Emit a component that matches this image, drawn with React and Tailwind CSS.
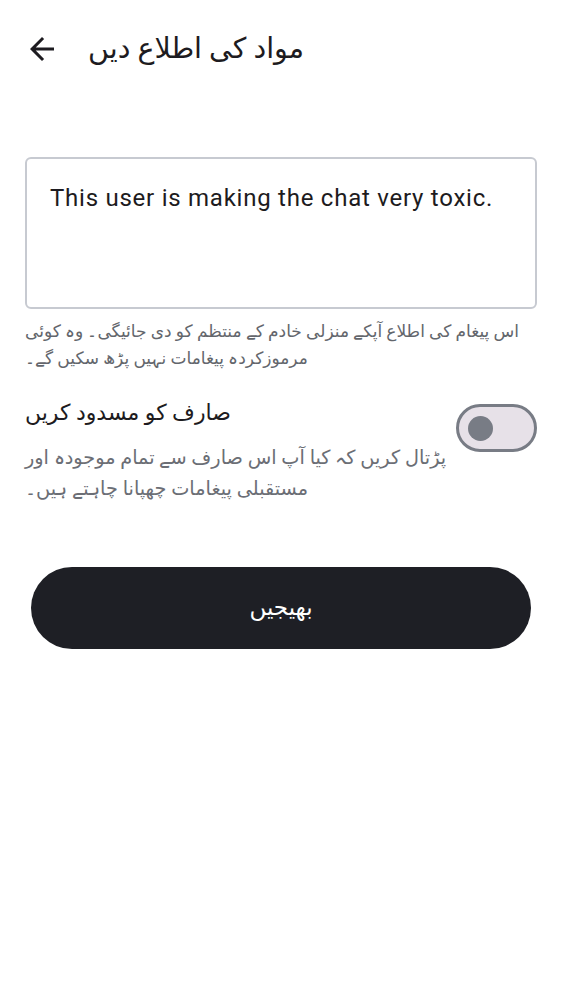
const font = { fontFamily: 'Roboto, "Noto Sans", "DejaVu Sans", sans-serif' }

function BackArrow() {
  return (
    <svg viewBox="0 0 24 24" className="h-[36px] w-[36px] fill-[#1d1b20]">
      <path d="M20 11H7.83l5.59-5.59L12 4l-8 8 8 8 1.41-1.41L7.83 13H20v-2z" />
    </svg>
  )
}

function Toggle() {
  return (
    <div className="flex h-[48px] w-[81px] shrink-0 items-center rounded-full border-[3px] border-[#787c85] bg-[#e7e1e8] pl-[9px]">
      <div className="h-[25px] w-[25px] rounded-full bg-[#787c85]" />
    </div>
  )
}

export default function App() {
  return (
    <div className="min-h-[1000px] bg-white text-[#1d1b20]" style={font}>
      <div className="flex h-[100px] items-center px-[24px] pb-[2px]">
        <BackArrow />
        <h1 className="ml-[28px] text-[28.5px] font-normal leading-none">مواد کی اطلاع دیں</h1>
      </div>

      <div className="px-[25px] pt-[57px]">
        <div className="h-[152px] rounded-[6px] border-[2px] border-[#c7cad1] px-[23px] pt-[23px] text-[24px] leading-[32px] tracking-[0.75px] text-[#1d1b20]">
          This user is making the chat very toxic.
        </div>
        <p className="mt-[9px] text-[17px] leading-[27px] text-[#63666c]">
          اس پیغام کی اطلاع آپکے منزلی خادم کے منتظم کو دی جائیگی۔ وہ کوئی مرموزکردہ پیغامات نہیں پڑھ سکیں گے۔
        </p>

        <div className="mt-[27px] flex items-start justify-between gap-[8px]">
          <div className="flex-1">
            <div className="text-[22px] leading-[28px] text-[#1d1b20]">صارف کو مسدود کریں</div>
            <p className="mt-[15px] text-[19.3px] leading-[31px] text-[#6b6e75]">
              پڑتال کریں کہ کیا آپ اس صارف سے تمام موجودہ اور مستقبلی پیغامات چھپانا چاہتے ہیں۔
            </p>
          </div>
          <div className="pt-[5px]">
            <Toggle />
          </div>
        </div>

        <div className="mt-[63px] px-[6px]">
          <button className="flex h-[82px] w-full items-center justify-center rounded-full bg-[#1e1f25] text-[23px] font-normal text-white">
            بھیجیں
          </button>
        </div>
      </div>
    </div>
  )
}
